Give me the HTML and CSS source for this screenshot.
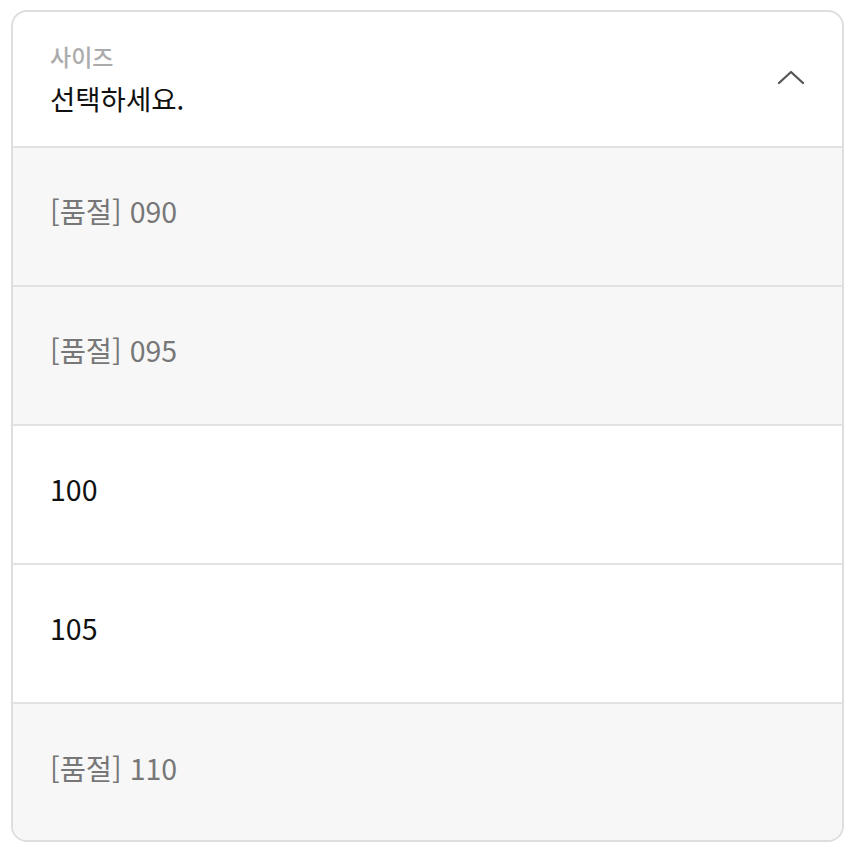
FILE: index.html
```html
<!DOCTYPE html>
<html lang="ko">
<head>
<meta charset="utf-8">
<link rel="stylesheet" href="styles.css">
</head>
<body>
<div class="page">
  <div class="select">
    <div class="head">
      <div class="head-text">
        <div class="label">사이즈</div>
        <div class="value">선택하세요.</div>
      </div>
      <svg class="chevron" width="30" height="18" viewBox="0 0 30 18"><path d="M3 15 L15 4 L27 15" fill="none" stroke="#555" stroke-width="2.3" stroke-linecap="round" stroke-linejoin="round"/></svg>
    </div>
    <div class="opt soldout">[품절] 090</div>
    <div class="opt soldout">[품절] 095</div>
    <div class="opt">100</div>
    <div class="opt">105</div>
    <div class="opt soldout">[품절] 110</div>
  </div>
</div>
</body>
</html>
```
FILE: styles.css
```css
html, body { margin: 0; padding: 0; background: #fff; }
body { font-family: "Noto Sans CJK KR", "Noto Sans", sans-serif; }
.page { padding: 10px 6px 0 11px; }
.select {
  width: 829px;
  border: 2px solid #dedede;
  border-radius: 16px;
  overflow: hidden;
}
.head {
  height: 136px;
  display: flex;
  align-items: center;
  justify-content: space-between;
  padding: 0 36px 0 37px;
  box-sizing: border-box;
  border-bottom: 2px solid #e2e2e2;
}
.head-text { display: flex; flex-direction: column; }
.label { font-size: 23px; color: #ababab; line-height: 30px; font-weight: 500; }
.value { font-size: 27.5px; color: #111; line-height: 38px; margin-top: 8px; }
.chevron { margin-top: -4px; }
.opt {
  height: 139px;
  box-sizing: border-box;
  display: flex;
  align-items: center;
  padding-left: 37px;
  padding-bottom: 12px;
  font-size: 28.5px;
  color: #111;
  background: #fff;
  border-bottom: 2px solid #e2e2e2;
}
.opt:last-child { border-bottom: none; height: 136px; padding-bottom: 10px; }
.opt.soldout { background: #f7f7f7; color: #777; }
```
